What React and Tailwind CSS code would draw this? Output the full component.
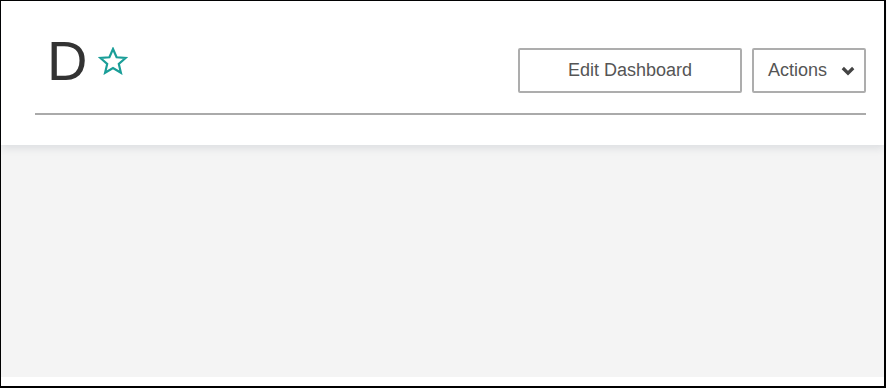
export default function App() {
  return (
    <div className="w-[886px] h-[388px] border-l border-t border-r-2 border-b-2 border-black bg-white flex flex-col font-['Liberation_Sans',Arial,sans-serif]">
      {/* Header */}
      <div className="relative z-10 bg-white pl-[34px] pr-[18px] pt-[28px] pb-[30px] shadow-[0_3px_8px_rgba(40,60,80,0.12)]">
        <div className="flex items-end justify-between">
          <div className="flex items-center h-[64px] pl-[12px]">
            <h1 className="text-[56px] leading-[64px] text-[#333]">D</h1>
            <button type="button" className="ml-[11px] text-[#1a9e98]">
              <svg width="30" height="28" viewBox="0 0 30 28" fill="none">
                <path
                  d="M15 2 L18.6 10.3 L27.6 11 L20.8 17 L22.9 25.8 L15 21.1 L7.1 25.8 L9.2 17 L2.4 11 L11.4 10.3 Z"
                  stroke="currentColor"
                  strokeWidth="2.2"
                  strokeLinejoin="miter"
                />
              </svg>
            </button>
          </div>
          <div className="flex items-center gap-[10px]">
            <button
              type="button"
              className="h-[45px] w-[224px] rounded-[2px] border-2 border-[#adadad] bg-white text-[18px] text-[#555]"
            >
              Edit Dashboard
            </button>
            <button
              type="button"
              className="h-[45px] w-[114px] flex items-center rounded-[2px] border-2 border-[#adadad] bg-white pl-[14px] text-[18px] text-[#555]"
            >
              Actions
              <svg width="14" height="10" viewBox="0 0 14 10" className="ml-[14px] text-[#444]">
                <path d="M1.8 2 L7 7.2 L12.2 2" fill="none" stroke="currentColor" strokeWidth="3.2" />
              </svg>
            </button>
          </div>
        </div>
        {/* Separator */}
        <div className="mt-[20px] h-[2px] bg-[#aaaaaa]" />
      </div>

      {/* Body */}
      <div className="h-[232px] bg-[#f4f4f4]" />
    </div>
  );
}
